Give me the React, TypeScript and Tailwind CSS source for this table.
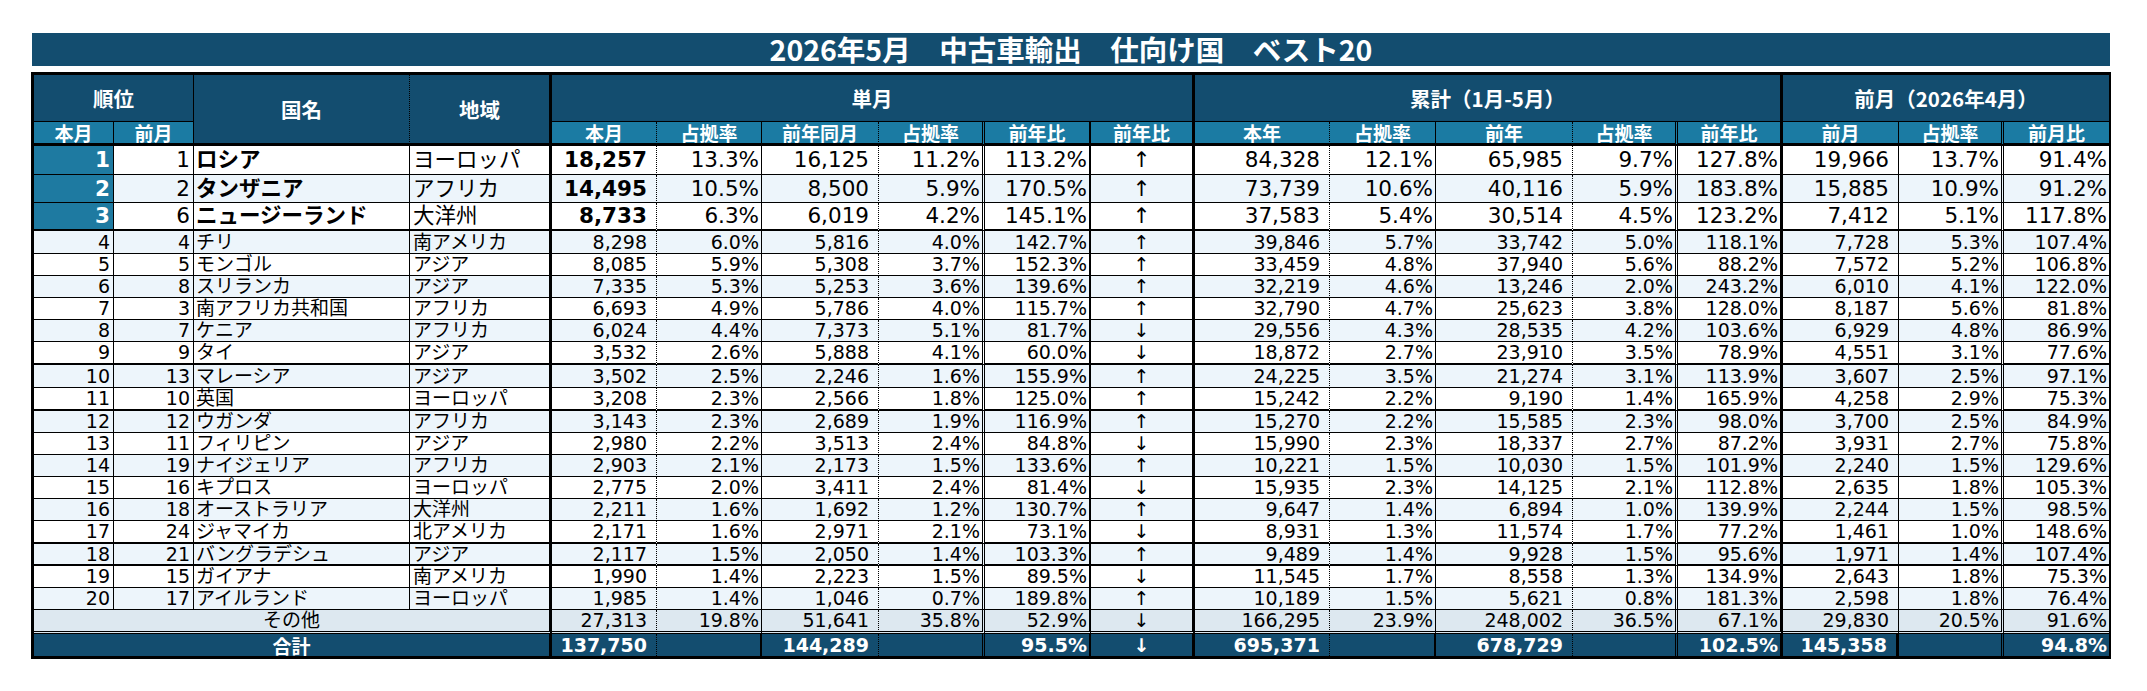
import React from "react";

const rows: string[][] = [
  ["1","1","ロシア","ヨーロッパ","18,257","13.3%","16,125","11.2%","113.2%","↑","84,328","12.1%","65,985","9.7%","127.8%","19,966","13.7%","91.4%"],
  ["2","2","タンザニア","アフリカ","14,495","10.5%","8,500","5.9%","170.5%","↑","73,739","10.6%","40,116","5.9%","183.8%","15,885","10.9%","91.2%"],
  ["3","6","ニュージーランド","大洋州","8,733","6.3%","6,019","4.2%","145.1%","↑","37,583","5.4%","30,514","4.5%","123.2%","7,412","5.1%","117.8%"],
  ["4","4","チリ","南アメリカ","8,298","6.0%","5,816","4.0%","142.7%","↑","39,846","5.7%","33,742","5.0%","118.1%","7,728","5.3%","107.4%"],
  ["5","5","モンゴル","アジア","8,085","5.9%","5,308","3.7%","152.3%","↑","33,459","4.8%","37,940","5.6%","88.2%","7,572","5.2%","106.8%"],
  ["6","8","スリランカ","アジア","7,335","5.3%","5,253","3.6%","139.6%","↑","32,219","4.6%","13,246","2.0%","243.2%","6,010","4.1%","122.0%"],
  ["7","3","南アフリカ共和国","アフリカ","6,693","4.9%","5,786","4.0%","115.7%","↑","32,790","4.7%","25,623","3.8%","128.0%","8,187","5.6%","81.8%"],
  ["8","7","ケニア","アフリカ","6,024","4.4%","7,373","5.1%","81.7%","↓","29,556","4.3%","28,535","4.2%","103.6%","6,929","4.8%","86.9%"],
  ["9","9","タイ","アジア","3,532","2.6%","5,888","4.1%","60.0%","↓","18,872","2.7%","23,910","3.5%","78.9%","4,551","3.1%","77.6%"],
  ["10","13","マレーシア","アジア","3,502","2.5%","2,246","1.6%","155.9%","↑","24,225","3.5%","21,274","3.1%","113.9%","3,607","2.5%","97.1%"],
  ["11","10","英国","ヨーロッパ","3,208","2.3%","2,566","1.8%","125.0%","↑","15,242","2.2%","9,190","1.4%","165.9%","4,258","2.9%","75.3%"],
  ["12","12","ウガンダ","アフリカ","3,143","2.3%","2,689","1.9%","116.9%","↑","15,270","2.2%","15,585","2.3%","98.0%","3,700","2.5%","84.9%"],
  ["13","11","フィリピン","アジア","2,980","2.2%","3,513","2.4%","84.8%","↓","15,990","2.3%","18,337","2.7%","87.2%","3,931","2.7%","75.8%"],
  ["14","19","ナイジェリア","アフリカ","2,903","2.1%","2,173","1.5%","133.6%","↑","10,221","1.5%","10,030","1.5%","101.9%","2,240","1.5%","129.6%"],
  ["15","16","キプロス","ヨーロッパ","2,775","2.0%","3,411","2.4%","81.4%","↓","15,935","2.3%","14,125","2.1%","112.8%","2,635","1.8%","105.3%"],
  ["16","18","オーストラリア","大洋州","2,211","1.6%","1,692","1.2%","130.7%","↑","9,647","1.4%","6,894","1.0%","139.9%","2,244","1.5%","98.5%"],
  ["17","24","ジャマイカ","北アメリカ","2,171","1.6%","2,971","2.1%","73.1%","↓","8,931","1.3%","11,574","1.7%","77.2%","1,461","1.0%","148.6%"],
  ["18","21","バングラデシュ","アジア","2,117","1.5%","2,050","1.4%","103.3%","↑","9,489","1.4%","9,928","1.5%","95.6%","1,971","1.4%","107.4%"],
  ["19","15","ガイアナ","南アメリカ","1,990","1.4%","2,223","1.5%","89.5%","↓","11,545","1.7%","8,558","1.3%","134.9%","2,643","1.8%","75.3%"],
  ["20","17","アイルランド","ヨーロッパ","1,985","1.4%","1,046","0.7%","189.8%","↑","10,189","1.5%","5,621","0.8%","181.3%","2,598","1.8%","76.4%"],
];

const others = ["27,313","19.8%","51,641","35.8%","52.9%","↓","166,295","23.9%","248,002","36.5%","67.1%","29,830","20.5%","91.6%"];
const totals = ["137,750","","144,289","","95.5%","↓","695,371","","678,729","","102.5%","145,358","","94.8%"];

const RB = [
  "border-r",
  "border-r",
  "border-r",
  "border-r-[3px]",
  "border-r [border-right-style:dotted]",
  "border-r",
  "border-r [border-right-style:dotted]",
  "border-r-[3px] [border-right-style:double]",
  "border-r-2",
  "border-r-[3px]",
  "border-r [border-right-style:dotted]",
  "border-r",
  "border-r [border-right-style:dotted]",
  "border-r-[3px] [border-right-style:double]",
  "border-r-[3px]",
  "border-r",
  "border-r-[3px] [border-right-style:double]",
  "",
];

const RB_TOTAL = [
  "border-r",
  "border-r",
  "border-r",
  "border-r-[3px]",
  "border-r [border-right-style:dotted]",
  "border-r-2",
  "border-r [border-right-style:dotted]",
  "border-r-[3px] [border-right-style:double]",
  "border-r-2",
  "border-r-[3px]",
  "border-r [border-right-style:dotted]",
  "border-r-2",
  "border-r [border-right-style:dotted]",
  "border-r-[3px] [border-right-style:double]",
  "border-r-[3px]",
  "border-r-[3px]",
  "border-r-[3px] [border-right-style:double]",
  "",
];

const AL = [
  "justify-end pr-[3px]",
  "justify-end pr-[3px]",
  "justify-start pl-[2px]",
  "justify-start pl-[3px]",
  "justify-end pr-[9px]",
  "justify-end pr-[2px]",
  "justify-end pr-[9px]",
  "justify-end pr-[2px]",
  "justify-end pr-[2px]",
  "justify-center",
  "justify-end pr-[9px]",
  "justify-end pr-[2px]",
  "justify-end pr-[9px]",
  "justify-end pr-[2px]",
  "justify-end pr-[2px]",
  "justify-end pr-[9px]",
  "justify-end pr-[2px]",
  "justify-end pr-[2px]",
];

const subHeaders = ["本月","占拠率","前年同月","占拠率","前年比","前年比","本年","占拠率","前年","占拠率","前年比","前月","占拠率","前月比"];

const THICK = new Set([3, 9, 11, 17, 18]);

const DATA_FONT = "font-['DejaVu_Sans','Noto_Sans_CJK_JP',sans-serif]";
const HEAD_FONT = "font-['Noto_Sans_CJK_JP',sans-serif]";

export default function App() {
  return (
    <div className="bg-white w-[2147px] h-[691px] pt-[33px] pl-[31px]">
      <div className={`ml-[1px] w-[2078px] h-[33px] bg-[#134d6f] text-white font-bold text-[28.5px] leading-none flex items-center justify-center ${HEAD_FONT}`}>
        2026年5月　中古車輸出　仕向け国　ベスト20
      </div>
      <div className="mt-[6px] w-[2080px] border-[3px] border-black grid grid-cols-[80px_80px_216px_142px_105px_105px_117px_106px_106px_104px_135px_106px_137px_105px_105px_116px_105px_105px] grid-rows-[47px_24px_29px_28px_28px_23px_22px_22px_22px_22px_23px_23px_23px_22px_22px_22px_22px_22px_23px_22px_22px_22px_24px_22px]">
        {/* header row 1 */}
        <div className={`col-span-2 bg-[#134d6f] text-white font-bold text-[20.5px] flex items-center justify-center border-black border-r border-b ${HEAD_FONT}`}>順位</div>
        <div className={`row-span-2 bg-[#134d6f] text-white font-bold text-[20.5px] flex items-center justify-center border-black border-r [border-right-style:dotted] border-b-[3px] ${HEAD_FONT}`}>国名</div>
        <div className={`row-span-2 bg-[#134d6f] text-white font-bold text-[20.5px] flex items-center justify-center border-black border-r-[3px] border-b-[3px] ${HEAD_FONT}`}>地域</div>
        <div className={`col-span-6 bg-[#134d6f] text-white font-bold text-[20.5px] flex items-center justify-center border-black border-r-[3px] border-b ${HEAD_FONT}`}>単月</div>
        <div className={`col-span-5 bg-[#134d6f] text-white font-bold text-[20.5px] flex items-center justify-center border-black border-r-[3px] border-b ${HEAD_FONT}`}>累計（1月-5月）</div>
        <div className={`col-span-3 bg-[#134d6f] text-white font-bold text-[20.5px] flex items-center justify-center border-black border-b ${HEAD_FONT}`}>前月（2026年4月）</div>
        {/* header row 2 */}
        <div className={`bg-[#1b7ba3] text-white font-bold text-[19px] leading-none flex items-center justify-center border-black border-r border-b-[3px] ${HEAD_FONT}`}>本月</div>
        <div className={`bg-[#1b7ba3] text-white font-bold text-[19px] leading-none flex items-center justify-center border-black border-r border-b-[3px] ${HEAD_FONT}`}>前月</div>
        {subHeaders.map((h, i) => (
          <div
            key={"sh" + i}
            className={`bg-[#1b7ba3] text-white font-bold text-[19px] leading-none flex items-center justify-center border-black border-b-[3px] ${RB[i + 4]} ${HEAD_FONT}`}
          >
            {h}
          </div>
        ))}
        {/* data rows */}
        {rows.map((row, ri) => {
          const r = ri + 1;
          const big = r <= 3;
          const bg = r % 2 === 0 ? "bg-[#edf5fb]" : "bg-white";
          const bb = THICK.has(r) ? "border-b-2" : "border-b";
          return row.map((v, ci) => {
            const rank = big && ci === 0;
            const bold = big && (ci === 0 || ci === 2 || ci === 4);
            return (
              <div
                key={`r${r}c${ci}`}
                className={`flex items-center whitespace-nowrap leading-none border-black ${bb} ${RB[ci]} ${AL[ci]} ${DATA_FONT} ${big ? "text-[21.5px]" : "text-[19px]"} ${rank ? "bg-[#1e7aa1] text-white" : bg + " text-black"} ${bold ? "font-bold" : "font-normal"}`}
              >
                {v}
              </div>
            );
          });
        })}
        {/* その他 */}
        <div className={`col-span-4 bg-[#dde8f0] text-black text-[19px] leading-none flex items-center justify-center border-black border-r-[3px] border-b-[3px] [border-bottom-style:double] ${DATA_FONT}`}>その他</div>
        {others.map((v, i) => (
          <div
            key={"o" + i}
            className={`bg-[#dde8f0] text-black text-[19px] leading-none flex items-center whitespace-nowrap border-black border-b-[3px] [border-bottom-style:double] ${RB[i + 4]} ${AL[i + 4]} ${DATA_FONT}`}
          >
            {v}
          </div>
        ))}
        {/* 合計 */}
        <div className={`col-span-4 bg-[#134d6f] text-white font-bold text-[19px] leading-none flex items-center justify-center border-black border-r-[3px] ${HEAD_FONT}`}>合計</div>
        {totals.map((v, i) => (
          <div
            key={"t" + i}
            className={`bg-[#134d6f] text-white font-bold text-[19px] leading-none flex items-center whitespace-nowrap border-black ${RB_TOTAL[i + 4]} ${AL[i + 4]} ${DATA_FONT}`}
          >
            {v}
          </div>
        ))}
      </div>
    </div>
  );
}
